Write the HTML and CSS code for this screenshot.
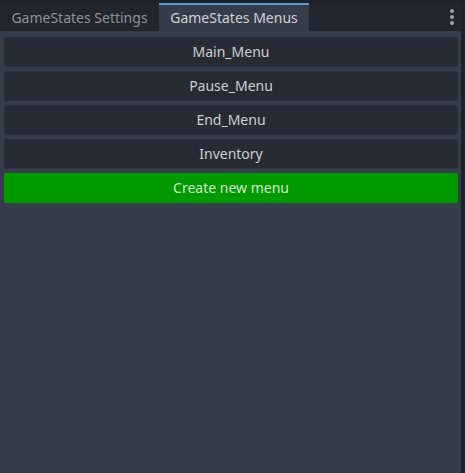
FILE: index.html
```html
<!DOCTYPE html>
<html>
<head>
<meta charset="utf-8">
<link rel="stylesheet" href="styles.css">
</head>
<body>
<div class="window">
  <div class="tabbar">
    <div class="tab">GameStates Settings</div>
    <div class="tab active">GameStates Menus</div>
    <div class="spacer"></div>
    <div class="kebab">
      <svg width="8" height="20" viewBox="0 0 8 20"><circle cx="4" cy="3" r="2" fill="#9ea2a9"/><circle cx="4" cy="9" r="2" fill="#9ea2a9"/><circle cx="4" cy="15" r="2" fill="#9ea2a9"/></svg>
    </div>
  </div>
  <div class="panel">
    <button class="btn">Main_Menu</button>
    <button class="btn">Pause_Menu</button>
    <button class="btn">End_Menu</button>
    <button class="btn">Inventory</button>
    <button class="btn create">Create new menu</button>
  </div>
</div>
</body>
</html>
```
FILE: styles.css
```css
html, body {
  margin: 0;
  padding: 0;
  background: #1d2128;
  width: 465px;
  height: 473px;
  overflow: hidden;
}
.window {
  width: 461px;
  height: 473px;
  display: flex;
  flex-direction: column;
  padding-top: 3px;
  box-sizing: border-box;
  font-family: "Noto Sans", sans-serif;
  font-size: 14px;
}
.tabbar {
  height: 28px;
  display: flex;
  align-items: stretch;
  background: #21262e;
}
.tab {
  padding: 0 11px;
  display: flex;
  align-items: center;
  color: #8d9199;
  width: 137px;
  justify-content: center;
  border-top: 1px solid transparent;
}
.tab.active {
  background: #363d4a;
  color: #cfd1d4;
  border-top: 2px solid #5f9fd8;
  width: 128px;
  padding-bottom: 1px;
}
.spacer { flex: 1; }
.kebab {
  width: 14px;
  display: flex;
  align-items: center;
  justify-content: center;
  padding-right: 2px;
  padding-top: 2px;
}
.panel {
  flex: 1;
  background: #363d4a;
  padding: 6px 3px 0 4px;
  display: flex;
  flex-direction: column;
  gap: 4px;
}
.btn {
  height: 30px;
  border: 1px solid #2b313b;
  border-radius: 2px;
  background: #262b35;
  color: #cdcfd2;
  font-family: "Noto Sans", sans-serif;
  font-size: 14px;
  padding: 0 0 2px 0;
  margin: 0;
}
.btn.create {
  background: #009900;
  border-color: #009900;
  color: #d0e8d0;
}
```
